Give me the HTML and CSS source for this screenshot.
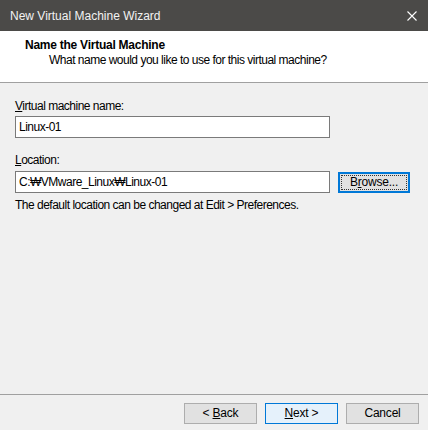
FILE: index.html
```html
<!DOCTYPE html>
<html>
<head>
<meta charset="utf-8">
<link rel="stylesheet" href="styles.css">
</head>
<body>
<div class="window">
  <div class="titlebar">
    <span class="title">New Virtual Machine Wizard</span>
    <svg class="close" width="10" height="10" viewBox="0 0 10 10"><path d="M0.5 0.5 L9.5 9.5 M9.5 0.5 L0.5 9.5" stroke="#ffffff" stroke-width="1.1" fill="none"/></svg>
  </div>
  <div class="header">
    <div class="h-title">Name the Virtual Machine</div>
    <div class="h-sub">What name would you like to use for this virtual machine?</div>
  </div>
  <div class="content">
    <div class="label"><u>V</u>irtual machine name:</div>
    <div class="input name-input">Linux-01</div>
    <div class="label loc-label"><u>L</u>ocation:</div>
    <div class="row">
      <div class="input">C:₩VMware_Linux₩Linux-01</div>
      <div class="btn browse"><span class="focus"><span>B<u>r</u>owse...</span></span></div>
    </div>
    <div class="hint">The default location can be changed at Edit &gt; Preferences.</div>
  </div>
  <div class="footer">
    <div class="btn"><span>&lt; <u>B</u>ack</span></div>
    <div class="btn next"><span><u>N</u>ext &gt;</span></div>
    <div class="btn"><span>Cancel</span></div>
  </div>
</div>
</body>
</html>
```
FILE: styles.css
```css
* { box-sizing: border-box; }
html, body { margin: 0; padding: 0; }
body {
  font-family: "Liberation Sans", "DejaVu Sans", sans-serif;
  font-size: 12px;
  letter-spacing: -0.5px;
  color: #000;
  background: #f0f0f0;
}
.window {
  width: 428px;
  height: 430px;
  display: flex;
  flex-direction: column;
  background: #f0f0f0;
}
.titlebar {
  height: 31px;
  background: #4b4a48;
  display: flex;
  align-items: center;
  justify-content: space-between;
  padding: 0 11px 0 10px;
  color: #f2f2f2;
}
.title { font-size: 12px; letter-spacing: 0; }
.close { display: block; }
.header {
  height: 52px;
  background: #fff;
  border-bottom: 1px solid #a0a0a0;
  padding: 7px 0 0 25px;
  line-height: 15px;
}
.h-title { font-weight: bold; font-size: 12px; letter-spacing: -0.25px; }
.h-sub { padding-left: 24px; }
.content {
  flex: 1;
  padding: 16px 15px 0 15px;
  line-height: 15px;
}
.label { margin-bottom: 2px; }
.loc-label { margin-top: 15px; margin-bottom: 3px; }
.input {
  width: 315px;
  height: 22px;
  border: 1px solid #7a7a7a;
  background: #fff;
  padding: 0 3px;
  line-height: 20px;
  white-space: nowrap;
}
.row {
  display: flex;
  align-items: center;
  gap: 8px;
}
.btn {
  width: 73px;
  height: 21px;
  border: 1px solid #adadad;
  background: #e1e1e1;
  display: flex;
  align-items: center;
  justify-content: center;
  line-height: 15px;
  letter-spacing: -0.2px;
  white-space: pre;
}
.browse {
  width: 72px;
  border: 2px solid #0078d7;
  padding: 1px;
}
.focus {
  flex: 1;
  align-self: stretch;
  border: 1px dotted #333;
  display: flex;
  align-items: center;
  justify-content: center;
}
.hint { margin-top: 5px; }
.footer {
  height: 36px;
  border-top: 1px solid #a0a0a0;
  display: flex;
  justify-content: flex-end;
  align-items: flex-start;
  gap: 8px;
  padding: 8px 9px 0 0;
}
.next {
  background: #e5f1fb;
  border-color: #0078d7;
}
```
